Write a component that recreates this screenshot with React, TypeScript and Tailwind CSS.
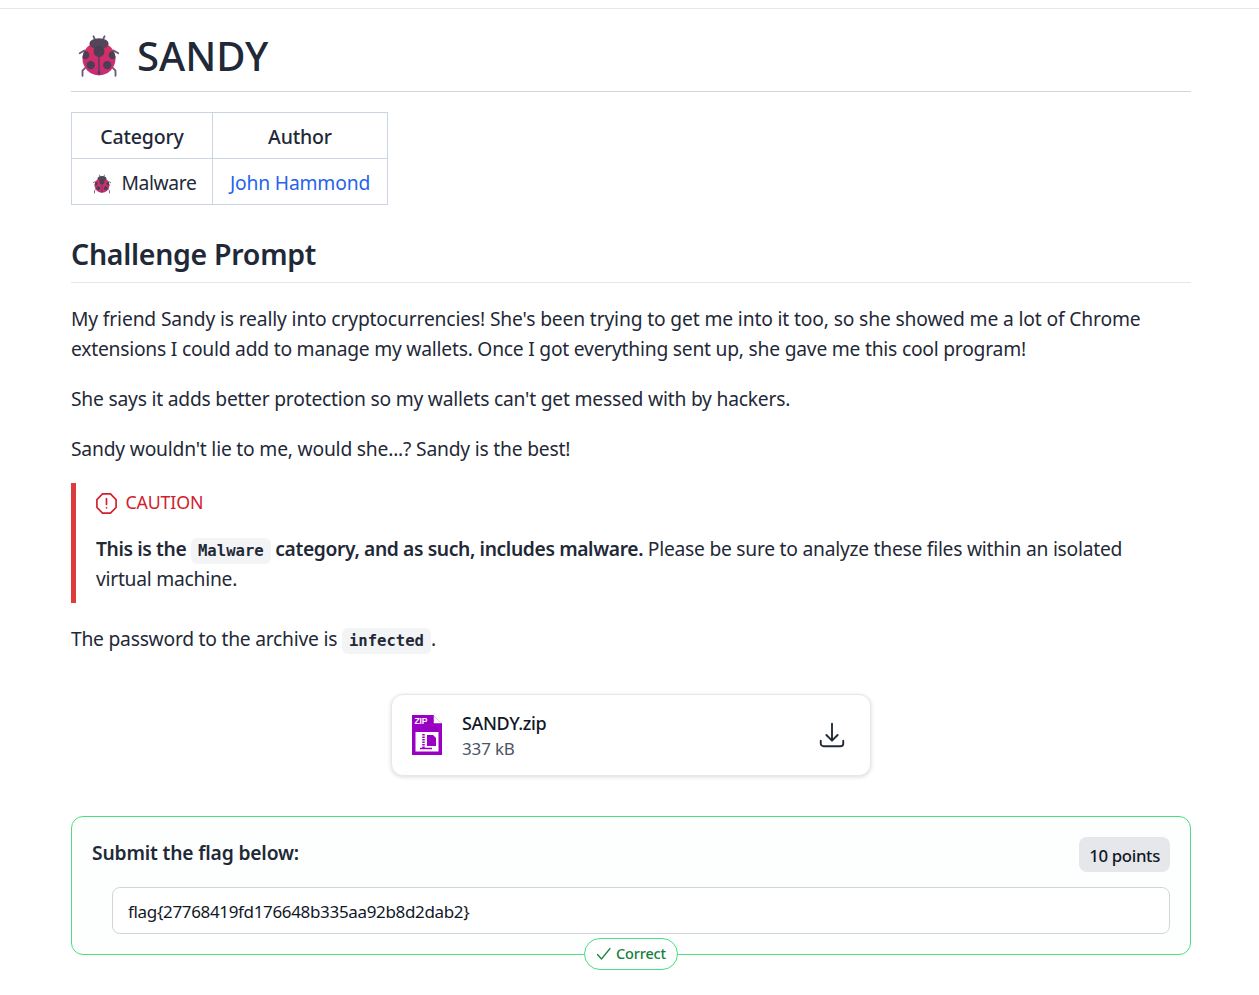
import React from "react";

const font = { fontFamily: '"Noto Sans", sans-serif' };

function Ladybug({ className }: { className: string }) {
  return (
    <svg viewBox="0 0 48 48" className={className} fill="none">
      <defs>
        <linearGradient id="lb" x1="0" y1="0" x2="0" y2="1">
          <stop offset="0" stopColor="#d9305f" />
          <stop offset="1" stopColor="#c92a78" />
        </linearGradient>
        <clipPath id="lbc">
          <circle cx="24" cy="27" r="18" />
        </clipPath>
      </defs>
      <g stroke="#6b5a70" strokeWidth="2" strokeLinecap="round" strokeLinejoin="round">
        <path d="M20 7l-2-4.5M28 7l2-4.5" />
        <path d="M8 18l-5 3M40 18l5 3" />
        <path d="M9 37l-3 3v5.5M39 37l3 3v5.5" />
      </g>
      <circle cx="24" cy="27" r="18" fill="url(#lb)" />
      <ellipse cx="24" cy="10.5" rx="10.5" ry="6" fill="#544659" />
      <path d="M24 20v25" stroke="#4b3f55" strokeWidth="1.4" />
      <circle cx="24" cy="19" r="6" fill="#4b3f55" />
      <g clipPath="url(#lbc)" fill="#4b3f55">
        <circle cx="15" cy="34" r="4.5" />
        <circle cx="33" cy="34" r="4.5" />
        <circle cx="39" cy="23" r="4.5" />
        <circle cx="9" cy="23" r="4.5" />
      </g>
      <circle cx="24" cy="42" r="1.6" fill="#4b3f55" />
    </svg>
  );
}

function ZipIcon() {
  return (
    <svg viewBox="0 0 30 40" className="w-[30px] h-10 shrink-0">
      <path d="M0 0h21l9 9v31H0z" fill="#9a00c4" />
      <path d="M21 0l9 9h-9z" fill="#fff" />
      <path d="M21 0v9h9" fill="none" stroke="#9a00c4" strokeWidth="1.5" />
      <rect x="3.5" y="17" width="23" height="19.5" fill="#fff" />
      <text x="2.5" y="9" fontSize="8.5" fontWeight="700" fill="#fff" fontFamily='"Liberation Sans", sans-serif'>ZIP</text>
      <path d="M15 20h6l3 3v8h-9z" fill="#9a00c4" />
      <path d="M11.5 19v14" stroke="#9a00c4" strokeWidth="2.5" strokeDasharray="1.5 1" />
      <path d="M8 33.5h12" stroke="#9a00c4" strokeWidth="1.5" />
    </svg>
  );
}

function Code({ children }: { children: React.ReactNode }) {
  return (
    <code
      className="bg-[#f3f4f6] rounded-md px-[7px] py-[4px] leading-none text-[15.6px] font-bold text-[#1f2937] tracking-normal"
      style={{ fontFamily: '"DejaVu Sans Mono", monospace' }}
    >
      {children}
    </code>
  );
}

export default function App() {
  return (
    <div className="bg-white min-h-[995px] text-[#1f2937] tracking-[-0.01em]" style={font}>
      <div className="h-2" />
      <div className="border-t border-[#e5e7eb]" />
      <main className="ml-[71px] w-[1120px]">
        <h1 className="h-[83px] border-b border-[#d1d5db] flex items-center text-[40px] font-medium pl-[6px] pt-[12px] tracking-normal leading-none">
          <Ladybug className="w-[44px] h-[44px] mr-[16px]" />
          SANDY
        </h1>

        <table className="mt-5 border-collapse text-[19.25px]">
          <thead>
            <tr className="h-[46px]">
              <th className="border border-[#cbd5e1] font-medium w-[141px] text-center text-[19.5px] pt-[2px]">Category</th>
              <th className="border border-[#cbd5e1] font-medium w-[175px] text-center text-[19.5px] pt-[2px]">Author</th>
            </tr>
          </thead>
          <tbody>
            <tr className="h-[46px]">
              <td className="border border-[#cbd5e1] text-center pl-[4px] pt-[4px]">
                <Ladybug className="inline-block w-5 h-5 mr-[10px] align-[-4px]" />
                <span className="tracking-[-0.02em]">Malware</span>
              </td>
              <td className="border border-[#cbd5e1] text-center text-[#2563eb] pt-[4px]">John Hammond</td>
            </tr>
          </tbody>
        </table>

        <h2 className="mt-[16px] h-[62px] border-b border-[#e5e7eb] text-[28.5px] font-semibold leading-[66px] tracking-[-0.01em]">
          Challenge Prompt
        </h2>

        <div className="text-[19.25px] leading-[30px]">
          <p className="mt-[21px]">
            <span className="tracking-[-0.0078em]">My friend Sandy is really into cryptocurrencies! She's been trying to get me into it too, so she showed me a lot of Chrome</span>{" "}
            <span className="tracking-[-0.0118em]">extensions I could add to manage my wallets. Once I got everything sent up, she gave me this cool program!</span>
          </p>
          <p className="mt-5 tracking-[-0.0112em]">She says it adds better protection so my wallets can't get messed with by hackers.</p>
          <p className="mt-5 tracking-[-0.0105em]">Sandy wouldn't lie to me, would she...? Sandy is the best!</p>

          <div className="mt-[19px] border-l-[5px] border-[#dc3c3c] pl-5 h-[120px]">
            <div className="flex items-center text-[#cf222e] text-[17.8px] h-10">
              <svg viewBox="0 0 24 24" className="w-[23px] h-[23px] -ml-[1.5px] mr-[8px]" fill="none" stroke="currentColor" strokeWidth="1.75" strokeLinecap="round" strokeLinejoin="round">
                <path d="M7.86 2h8.28L22 7.86v8.28L16.14 22H7.86L2 16.14V7.86z" />
                <path d="M12 7v6" />
                <path d="M12 16.5h.01" />
              </svg>
              <span className="mb-[2px]">CAUTION</span>
            </div>
            <p className="mt-[11px] pr-[30px] tracking-[-0.0133em]">
              <strong className="font-semibold tracking-[-0.0195em]">
                This is the <Code>Malware</Code> category, and as such, includes malware.
              </strong>{" "}
              Please be sure to analyze these files within an isolated virtual machine.
            </p>
          </div>

          <p className="mt-[21px] tracking-[-0.0125em]">
            The password to the archive is <Code>infected</Code>.
          </p>
        </div>

        <div className="mt-10 mx-auto w-[480px] h-[82px] rounded-xl border border-[#e5e7eb] shadow-[0_1px_4px_rgba(0,0,0,0.15)] flex items-center pl-5 pr-[23px] bg-white">
          <ZipIcon />
          <div className="ml-5 flex-1 pt-[1px]">
            <div className="text-[18px] leading-[25px] font-medium text-[#111827] tracking-[-0.02em]">SANDY.zip</div>
            <div className="text-[17px] leading-[25px] text-[#4b5563]">337 kB</div>
          </div>
          <svg viewBox="0 0 24 24" className="w-[30px] h-[30px]" fill="none" stroke="#1f2937" strokeWidth="1.5" strokeLinecap="round" strokeLinejoin="round">
            <path d="M3 16.5v2.25A2.25 2.25 0 0 0 5.25 21h13.5A2.25 2.25 0 0 0 21 18.75V16.5M16.5 12 12 16.5m0 0L7.5 12m4.5 4.5V3" />
          </svg>
        </div>

        <div className="relative mt-10 h-[139px] rounded-xl border border-[#4ade80] bg-[#fdfefe] px-5 pt-5">
          <div className="flex items-start justify-between h-[50px]">
            <div className="text-[19.25px] font-semibold leading-[32px]">Submit the flag below:</div>
            <div className="h-[35px] rounded-lg bg-[#e5e7eb] px-[10px] text-[16.8px] font-medium leading-[37px] text-[#111827] tracking-[-0.02em]">10 points</div>
          </div>
          <div className="ml-5 h-[47px] rounded-lg border border-[#d1d5db] bg-white flex items-center pl-[15px] pt-[2px] text-[17px] text-[#111827] tracking-[-0.02em]">
            flag{"{"}27768419fd176648b335aa92b8d2dab2{"}"}
          </div>
          <div className="absolute left-[512px] top-[121px] w-[94px] h-8 rounded-full border border-[#4ade80] bg-white flex items-center justify-center text-[14.5px] font-medium text-[#15803d]">
            <svg viewBox="0 0 16 16" className="w-4 h-4 mr-[4px]" fill="none" stroke="#15803d" strokeWidth="1.2" strokeLinecap="round" strokeLinejoin="round">
              <path d="M1.5 8.5 5.5 13 14 2.5" />
            </svg>
            Correct
          </div>
        </div>
      </main>
    </div>
  );
}
